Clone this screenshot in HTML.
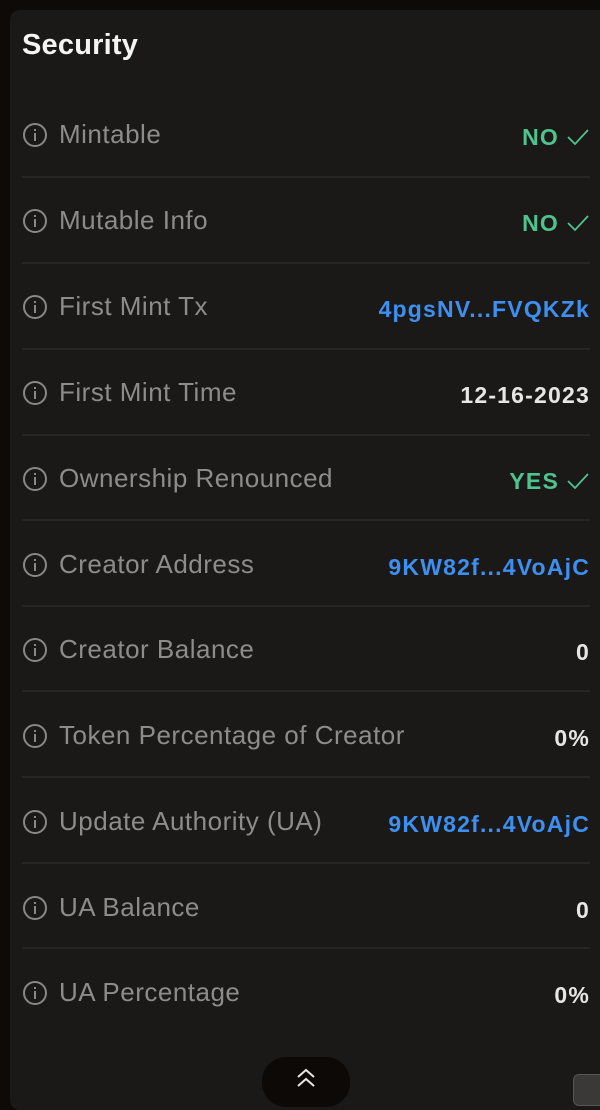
<!DOCTYPE html>
<html><head><meta charset="utf-8"><style>
html,body{margin:0;padding:0;width:600px;height:1088px;overflow:hidden;background:#0d0a08;font-family:"Liberation Sans",Arial,sans-serif}
.card{position:absolute;left:10px;top:10px;width:600px;height:1100px;background:#1a1917;border-radius:10px}
h1{position:absolute;left:22px;top:29px;margin:0;font-size:29px;font-weight:bold;color:#f4f4f4;letter-spacing:0.2px}
.row{position:absolute;left:0;width:600px;height:40px}
.ic{position:absolute;left:23px;top:6px;width:20px;height:20px;border:2px solid #8a8886;border-radius:50%}
.ic:before{content:"";position:absolute;left:9px;top:4px;width:2px;height:2px;background:#8a8886}
.ic:after{content:"";position:absolute;left:9px;top:8px;width:2px;height:8px;background:#8a8886}
.lb{position:absolute;left:59px;top:2px;font-size:26px;color:#8e8c8a;letter-spacing:0.5px}
.v{position:absolute;right:10px;top:7px;font-size:23px;font-weight:bold;color:#e6e6e6;letter-spacing:1.2px}
.g{color:#4ec38e}.b{color:#3d8ff0}
.g svg{vertical-align:-2px;margin-left:7px}
.d{position:absolute;left:22px;width:568px;height:2px;background:#262523}
.btn{position:absolute;left:262px;top:1057px;width:88px;height:50px;border-radius:24px;background:#0c0907}
.sq{position:absolute;left:573px;top:1074px;width:40px;height:30px;border-radius:6px;background:#3a3937;border:1px solid #555}
</style></head><body>
<div class="card"></div>
<h1>Security</h1>
<div class="row" style="top:117px"><div class="ic"></div><div class="lb">Mintable</div><div class="v g">NO<svg width="24" height="20" viewBox="0 0 24 20"><path d="M2 10l7 7L22 3" fill="none" stroke="#4ec38e" stroke-width="1.8"/></svg></div></div>
<div class="d" style="top:176px"></div>
<div class="row" style="top:203px"><div class="ic"></div><div class="lb">Mutable Info</div><div class="v g">NO<svg width="24" height="20" viewBox="0 0 24 20"><path d="M2 10l7 7L22 3" fill="none" stroke="#4ec38e" stroke-width="1.8"/></svg></div></div>
<div class="d" style="top:262px"></div>
<div class="row" style="top:289px"><div class="ic"></div><div class="lb">First Mint Tx</div><div class="v b">4pgsNV...FVQKZk</div></div>
<div class="d" style="top:348px"></div>
<div class="row" style="top:375px"><div class="ic"></div><div class="lb">First Mint Time</div><div class="v">12-16-2023</div></div>
<div class="d" style="top:434px"></div>
<div class="row" style="top:461px"><div class="ic"></div><div class="lb">Ownership Renounced</div><div class="v g">YES<svg width="24" height="20" viewBox="0 0 24 20"><path d="M2 10l7 7L22 3" fill="none" stroke="#4ec38e" stroke-width="1.8"/></svg></div></div>
<div class="d" style="top:519px"></div>
<div class="row" style="top:547px"><div class="ic"></div><div class="lb">Creator Address</div><div class="v b">9KW82f...4VoAjC</div></div>
<div class="d" style="top:605px"></div>
<div class="row" style="top:632px"><div class="ic"></div><div class="lb">Creator Balance</div><div class="v">0</div></div>
<div class="d" style="top:690px"></div>
<div class="row" style="top:718px"><div class="ic"></div><div class="lb">Token Percentage of Creator</div><div class="v">0%</div></div>
<div class="d" style="top:776px"></div>
<div class="row" style="top:804px"><div class="ic"></div><div class="lb">Update Authority (UA)</div><div class="v b">9KW82f...4VoAjC</div></div>
<div class="d" style="top:862px"></div>
<div class="row" style="top:890px"><div class="ic"></div><div class="lb">UA Balance</div><div class="v">0</div></div>
<div class="d" style="top:947px"></div>
<div class="row" style="top:975px"><div class="ic"></div><div class="lb">UA Percentage</div><div class="v">0%</div></div>
<div class="btn"><svg style="position:absolute;left:33px;top:10px" width="22" height="22" viewBox="0 0 22 22"><path d="M3 10l8-7 8 7M3 19l8-7 8 7" fill="none" stroke="#e6e6e6" stroke-width="2"/></svg></div>
<div class="sq"></div>
</body></html>
